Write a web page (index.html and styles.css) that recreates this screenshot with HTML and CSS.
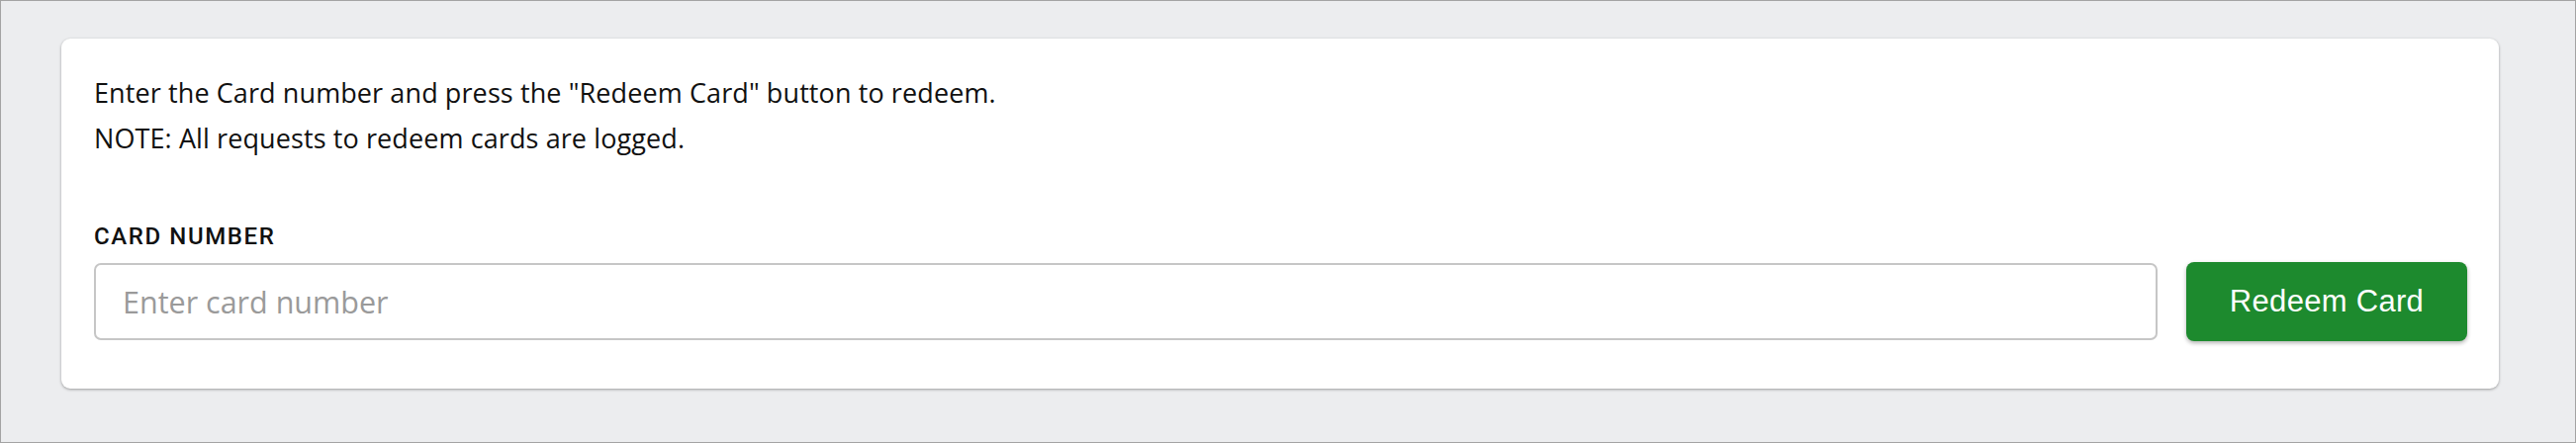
FILE: index.html
```html
<!DOCTYPE html>
<html lang="en">
<head>
    <meta charset="UTF-8">
    <meta name="viewport" content="width=device-width, initial-scale=1.0">
    <title>Redeem Card</title>
    <link rel="stylesheet" href="styles.css">
</head>
<body>
    <div class="page">
        <div class="card">
            <p class="intro">Enter the Card number and press the "Redeem Card" button to redeem.</p>
            <p class="intro">NOTE: All requests to redeem cards are logged.</p>

            <form class="redeem-form" onsubmit="return false;">
                <label class="field-label" for="cardNumber">CARD NUMBER</label>
                <div class="field-row">
                    <input type="text" id="cardNumber" class="card-input" placeholder="Enter card number">
                    <button type="submit" class="redeem-button">Redeem Card</button>
                </div>
            </form>
        </div>
    </div>
</body>
</html>
```

FILE: styles.css
```css
* {
    box-sizing: border-box;
    margin: 0;
    padding: 0;
}

html,
body {
    height: 100%;
}

body {
    font-family: "Open Sans", "Liberation Sans", sans-serif;
    color: #111111;
    background-color: #ecedef;
}

/* outer frame of the screen */
.page {
    height: 100%;
    border: 1px solid #a3a3a3;
    background-color: #ecedef;
    padding: 38px 77px 0 61px;
}

.card {
    background-color: #ffffff;
    border-radius: 9px;
    box-shadow: 0 1px 3px rgba(0, 0, 0, 0.35);
    padding: 32px 32px 48px 33px;
}

.intro {
    font-size: 27px;
    line-height: 46px;
    letter-spacing: 0.1px;
}

.redeem-form {
    margin-top: 62px;
}

.field-label {
    display: block;
    font-family: Roboto, "Liberation Sans", sans-serif;
    font-weight: 500;
    font-size: 24px;
    letter-spacing: 1.6px;
    line-height: 28px;
    margin-bottom: 12px;
}

.field-row {
    display: flex;
    align-items: center;
    gap: 29px;
}

.card-input {
    flex: 1;
    height: 78px;
    border: 2px solid #c6c6c6;
    border-radius: 7px;
    padding: 0 27px;
    font-family: "Open Sans", "Liberation Sans", sans-serif;
    font-size: 30.5px;
    color: #111111;
    outline: none;
}

.card-input::placeholder {
    color: #9a9a9a;
}

.redeem-button {
    width: 284px;
    height: 80px;
    background-color: #1d8a2e;
    color: #ffffff;
    border: none;
    border-radius: 8px;
    box-shadow: 0 2px 4px rgba(0, 0, 0, 0.3);
    font-family: "Liberation Sans", Arial, sans-serif;
    font-size: 31px;
    letter-spacing: 0.3px;
    cursor: pointer;
}
```
